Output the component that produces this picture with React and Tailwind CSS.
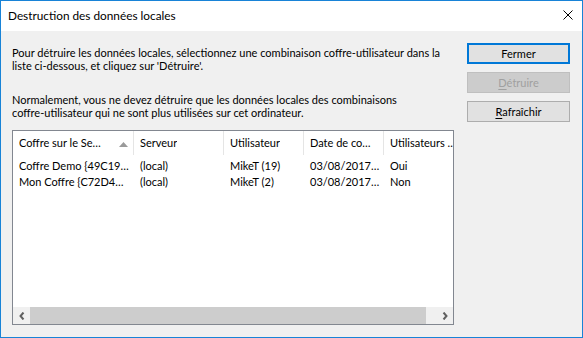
import React from "react";

const font = { fontFamily: 'Lato, "Noto Sans", sans-serif' };

function Header({ w, children, arrow }) {
  return (
    <div className="relative flex h-full shrink-0 items-center border-r border-[#e5e5e5] pl-[6px]" style={{ width: w }}>
      <span className="truncate whitespace-nowrap">{children}</span>
      {arrow && (
        <svg className="absolute right-[5px] top-[11px]" width="9" height="5" viewBox="0 0 9 5">
          <polygon points="0,5 4.5,0 9,5" fill="#9a9a9a" />
        </svg>
      )}
    </div>
  );
}

function Cell({ w, children }) {
  return (
    <div className="shrink-0 overflow-hidden whitespace-nowrap pl-[6px]" style={{ width: w }}>
      {children}
    </div>
  );
}

const widths = [121, 90, 80, 80, 70];

const rows = [
  ["Coffre Demo {49C19…", "(local)", "MikeT (19)", "03/08/2017…", "Oui"],
  ["Mon Coffre {C72D4…", "(local)", "MikeT (2)", "03/08/2017…", "Non"],
];

export default function App() {
  return (
    <div
      className="flex h-[338px] w-[583px] flex-col border border-[#1883d7] bg-[#f0f0f0] text-[11px] text-black"
      style={font}
    >
      <div className="flex h-[30px] shrink-0 items-center justify-between bg-white pl-[7px] pr-[9px]">
        <span className="text-[11.8px]">Destruction des données locales</span>
        <svg width="10" height="10" viewBox="0 0 10 10" className="mt-[-2px]">
          <path d="M0.5 0.5 L9.5 9.5 M9.5 0.5 L0.5 9.5" stroke="#000" strokeWidth="1" />
        </svg>
      </div>
      <div className="flex flex-1 gap-[13px] px-[11px] pb-[12px] pt-[12px]">
        <div className="flex w-[442px] flex-col">
          <div className="pt-[3px] leading-[13px]">
            <p className="whitespace-nowrap">Pour détruire les données locales, sélectionnez une combinaison coffre-utilisateur dans la</p>
            <p>liste ci-dessous, et cliquez sur 'Détruire'.</p>
            <p className="mt-[21px] whitespace-nowrap">Normalement, vous ne devez détruire que les données locales des combinaisons</p>
            <p>coffre-utilisateur qui ne sont plus utilisées sur cet ordinateur.</p>
          </div>
          <div className="mt-[11px] flex flex-1 flex-col border border-[#828790] bg-white">
            <div className="flex h-[24px] shrink-0 overflow-hidden">
              <Header w={widths[0]} arrow>Coffre sur le Se…</Header>
              <Header w={widths[1]}>Serveur</Header>
              <Header w={widths[2]}>Utilisateur</Header>
              <Header w={widths[3]}>Date de co…</Header>
              <div className="flex h-full flex-1 items-center overflow-hidden whitespace-nowrap pl-[6px]">Utilisateurs ..</div>
            </div>
            <div className="flex-1 pt-[3px]">
              {rows.map((r, i) => (
                <div key={i} className="flex h-[16px] items-center overflow-hidden">
                  {r.map((c, j) => (
                    <Cell key={j} w={widths[j]}>{c}</Cell>
                  ))}
                </div>
              ))}
            </div>
            <div className="flex h-[17px] shrink-0 bg-[#f0f0f0]">
              <div className="flex w-[17px] items-center justify-center">
                <svg width="6" height="8" viewBox="0 0 6 8">
                  <path d="M4.5 0.5 L1.5 4 L4.5 7.5" stroke="#606060" strokeWidth="2" fill="none" />
                </svg>
              </div>
              <div className="flex flex-1 pr-[10px]">
                <div className="h-full flex-1 bg-[#cdcdcd]" />
              </div>
              <div className="flex w-[17px] items-center justify-center">
                <svg width="6" height="8" viewBox="0 0 6 8">
                  <path d="M1.5 0.5 L4.5 4 L1.5 7.5" stroke="#606060" strokeWidth="2" fill="none" />
                </svg>
              </div>
            </div>
          </div>
        </div>
        <div className="flex w-[103px] flex-col gap-[8px]">
          <button className="h-[21px] border-2 border-[#0078d7] bg-[#e1e1e1] text-[11px] leading-none">Fermer</button>
          <button className="h-[21px] border border-[#bfbfbf] bg-[#cccccc] text-[11px] leading-none text-[#a0a0a0]">
            <span className="underline underline-offset-2">D</span>étruire
          </button>
          <button className="h-[21px] border border-[#adadad] bg-[#e1e1e1] text-[11px] leading-none">
            <span className="underline underline-offset-2">R</span>afraîchir
          </button>
        </div>
      </div>
    </div>
  );
}
